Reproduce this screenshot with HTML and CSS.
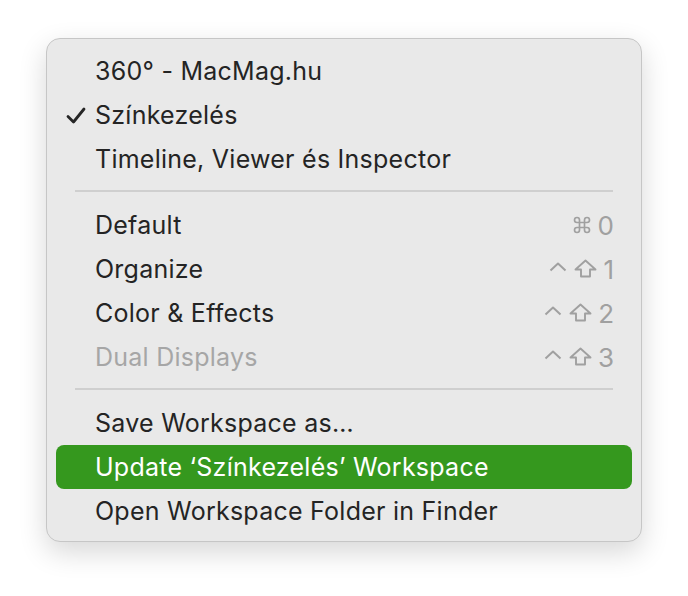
FILE: index.html
```html
<!DOCTYPE html>
<html lang="hu">
<head>
    <meta charset="UTF-8">
    <title>Workspaces</title>
    <link rel="stylesheet" href="styles.css">
</head>
<body>

<div class="menu">
    <div class="item"><span class="label">360° - MacMag.hu</span></div>
    <div class="item checked">
        <svg class="check" viewBox="0 0 20 17" width="20" height="17">
            <path d="M2 9.5 L7.5 15 L18 2" fill="none" stroke="#262626" stroke-width="2.8" stroke-linecap="round" stroke-linejoin="round"/>
        </svg>
        <span class="label">Színkezelés</span>
    </div>
    <div class="item"><span class="label">Timeline, Viewer és Inspector</span></div>

    <div class="separator"></div>

    <div class="item">
        <span class="label">Default</span>
        <span class="keys">
            <svg class="cmd" viewBox="0 0 24 24" width="20" height="20"><path d="M15 6v12a3 3 0 1 0 3-3H6a3 3 0 1 0 3 3V6a3 3 0 1 0-3 3h12a3 3 0 1 0-3-3" fill="none" stroke="currentColor" stroke-width="2"/></svg>0
        </span>
    </div>
    <div class="item">
        <span class="label">Organize</span>
        <span class="keys">
            <svg class="ctrl" viewBox="0 0 18 10" width="18" height="10"><polyline points="1.5,8.5 9,1.5 16.5,8.5" fill="none" stroke="currentColor" stroke-width="2" stroke-linejoin="round"/></svg>
            <svg class="shift" viewBox="0 0 23 19" width="23" height="19"><path d="M11.5 1.5 L21.5 10.5 H16 V17.5 H7 V10.5 H1.5 Z" fill="none" stroke="currentColor" stroke-width="1.9" stroke-linejoin="round"/></svg>1
        </span>
    </div>
    <div class="item">
        <span class="label">Color &amp; Effects</span>
        <span class="keys">
            <svg class="ctrl" viewBox="0 0 18 10" width="18" height="10"><polyline points="1.5,8.5 9,1.5 16.5,8.5" fill="none" stroke="currentColor" stroke-width="2" stroke-linejoin="round"/></svg>
            <svg class="shift" viewBox="0 0 23 19" width="23" height="19"><path d="M11.5 1.5 L21.5 10.5 H16 V17.5 H7 V10.5 H1.5 Z" fill="none" stroke="currentColor" stroke-width="1.9" stroke-linejoin="round"/></svg>2
        </span>
    </div>
    <div class="item disabled">
        <span class="label">Dual Displays</span>
        <span class="keys">
            <svg class="ctrl" viewBox="0 0 18 10" width="18" height="10"><polyline points="1.5,8.5 9,1.5 16.5,8.5" fill="none" stroke="currentColor" stroke-width="2" stroke-linejoin="round"/></svg>
            <svg class="shift" viewBox="0 0 23 19" width="23" height="19"><path d="M11.5 1.5 L21.5 10.5 H16 V17.5 H7 V10.5 H1.5 Z" fill="none" stroke="currentColor" stroke-width="1.9" stroke-linejoin="round"/></svg>3
        </span>
    </div>

    <div class="separator"></div>

    <div class="item"><span class="label">Save Workspace as…</span></div>
    <div class="item selected"><span class="label">Update ‘Színkezelés’ Workspace</span></div>
    <div class="item"><span class="label">Open Workspace Folder in Finder</span></div>
</div>

</body>
</html>
```

FILE: styles.css
```css
html, body {
    margin: 0;
    min-height: 100%;
    background: #ffffff;
}
body {
    height: 596px;
    padding-top: 38px;
    box-sizing: border-box;
    font-family: 'Inter', 'Noto Sans', sans-serif;
}
.menu {
    margin-left: 46px;
    width: 594px;
    padding: 10px 0 8px;
    background: #e9e9e9;
    border: 1px solid #c6c6c6;
    border-radius: 14px;
    box-shadow: 0 10px 28px rgba(0, 0, 0, 0.16);
}
.item {
    position: relative;
    display: flex;
    align-items: center;
    justify-content: space-between;
    height: 44px;
    margin: 0 9px;
    padding: 0 18px 0 39px;
    border-radius: 8px;
    font-size: 25px;
    color: #242424;
}
.label {
    letter-spacing: 0.25px;
}
.check {
    position: absolute;
    left: 10px;
    top: 14px;
}
.keys {
    display: flex;
    align-items: center;
    color: #a0a0a0;
    font-size: 26px;
}
.cmd {
    margin-right: 6px;
}
.ctrl {
    margin-right: 7px;
    margin-top: -4px;
}
.shift {
    margin-right: 6px;
    margin-top: -1px;
}
.disabled {
    color: #a6a6a6;
}
.selected {
    background: #35981e;
    color: #ffffff;
}
.separator {
    height: 2px;
    margin: 9px 28px 11px;
    background: #cfcfcf;
}
```
